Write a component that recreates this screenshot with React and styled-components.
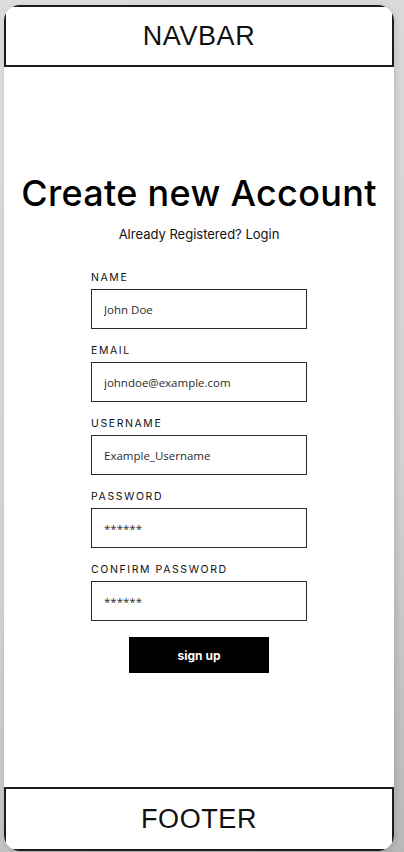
import React from 'react'
import styled, { createGlobalStyle } from 'styled-components'

const GlobalStyle = createGlobalStyle`
  html, body {
    margin: 0;
    padding: 0;
  }
  body {
    background: linear-gradient(160deg, #dcdcdc 0%, #d2d2d2 60%, #b8b8b8 100%);
    height: 852px;
    overflow: hidden;
  }
`

const Phone = styled.div`
  box-sizing: border-box;
  margin: 5px 0 0 4px;
  width: 390px;
  height: 846px;
  background: #fff;
  border-radius: 16px;
  overflow: hidden;
  display: flex;
  flex-direction: column;
  box-shadow: 2px 2px 6px rgba(0, 0, 0, 0.12);
`

const Bar = styled.div`
  box-sizing: border-box;
  height: ${(p) => p.h}px;
  border: 2px solid #1c1c1c;
  display: flex;
  align-items: center;
  justify-content: center;
  font-family: "Liberation Sans", Arial, sans-serif;
  font-size: 27px;
  color: #111;
  letter-spacing: 0.6px;
`

const Main = styled.main`
  flex: 1;
  display: flex;
  flex-direction: column;
  align-items: center;
  padding-top: 103px;
`

const Title = styled.h1`
  margin: 0;
  font-family: Inter, sans-serif;
  font-weight: 500;
  font-size: 36px;
  line-height: 46px;
  color: #000;
  letter-spacing: 0.3px;
`

const Sub = styled.p`
  margin: 9px 0 28px;
  font-family: Inter, sans-serif;
  font-size: 13px;
  line-height: 18px;
  color: #111;
`

const Form = styled.form`
  width: 216px;
  display: flex;
  flex-direction: column;
`

const Field = styled.div`
  display: flex;
  flex-direction: column;
  margin-bottom: 15px;
`

const Label = styled.label`
  font-family: Inter, sans-serif;
  font-size: 10.5px;
  letter-spacing: 1.6px;
  color: #111;
  line-height: 14px;
  margin-bottom: 4px;
`

const Input = styled.input`
  box-sizing: border-box;
  width: 216px;
  height: 40px;
  border: 1px solid #2a2a2a;
  padding: 0 12px;
  font-family: "Open Sans", sans-serif;
  font-weight: 400;
  font-size: 11.5px;
  color: #222;
  outline: none;
  &::placeholder {
    color: #2a2a2a;
    opacity: 1;
  }
`

const Button = styled.button`
  align-self: center;
  width: 140px;
  height: 36px;
  margin-top: 1px;
  border: none;
  background: #000;
  color: #fff;
  font-family: Inter, sans-serif;
  font-weight: 700;
  font-size: 12px;
`

const fields = [
  { label: 'NAME', ph: 'John Doe' },
  { label: 'EMAIL', ph: 'johndoe@example.com' },
  { label: 'USERNAME', ph: 'Example_Username' },
  { label: 'PASSWORD', ph: '******' },
  { label: 'CONFIRM PASSWORD', ph: '******' },
]

export default function App() {
  return (
    <>
      <GlobalStyle />
      <Phone>
        <Bar h={62}>NAVBAR</Bar>
        <Main>
          <Title>Create new Account</Title>
          <Sub>Already Registered? Login</Sub>
          <Form onSubmit={(e) => e.preventDefault()}>
            {fields.map((f) => (
              <Field key={f.label}>
                <Label>{f.label}</Label>
                <Input placeholder={f.ph} />
              </Field>
            ))}
            <Button type="submit">sign up</Button>
          </Form>
        </Main>
        <Bar h={64}>FOOTER</Bar>
      </Phone>
    </>
  )
}
